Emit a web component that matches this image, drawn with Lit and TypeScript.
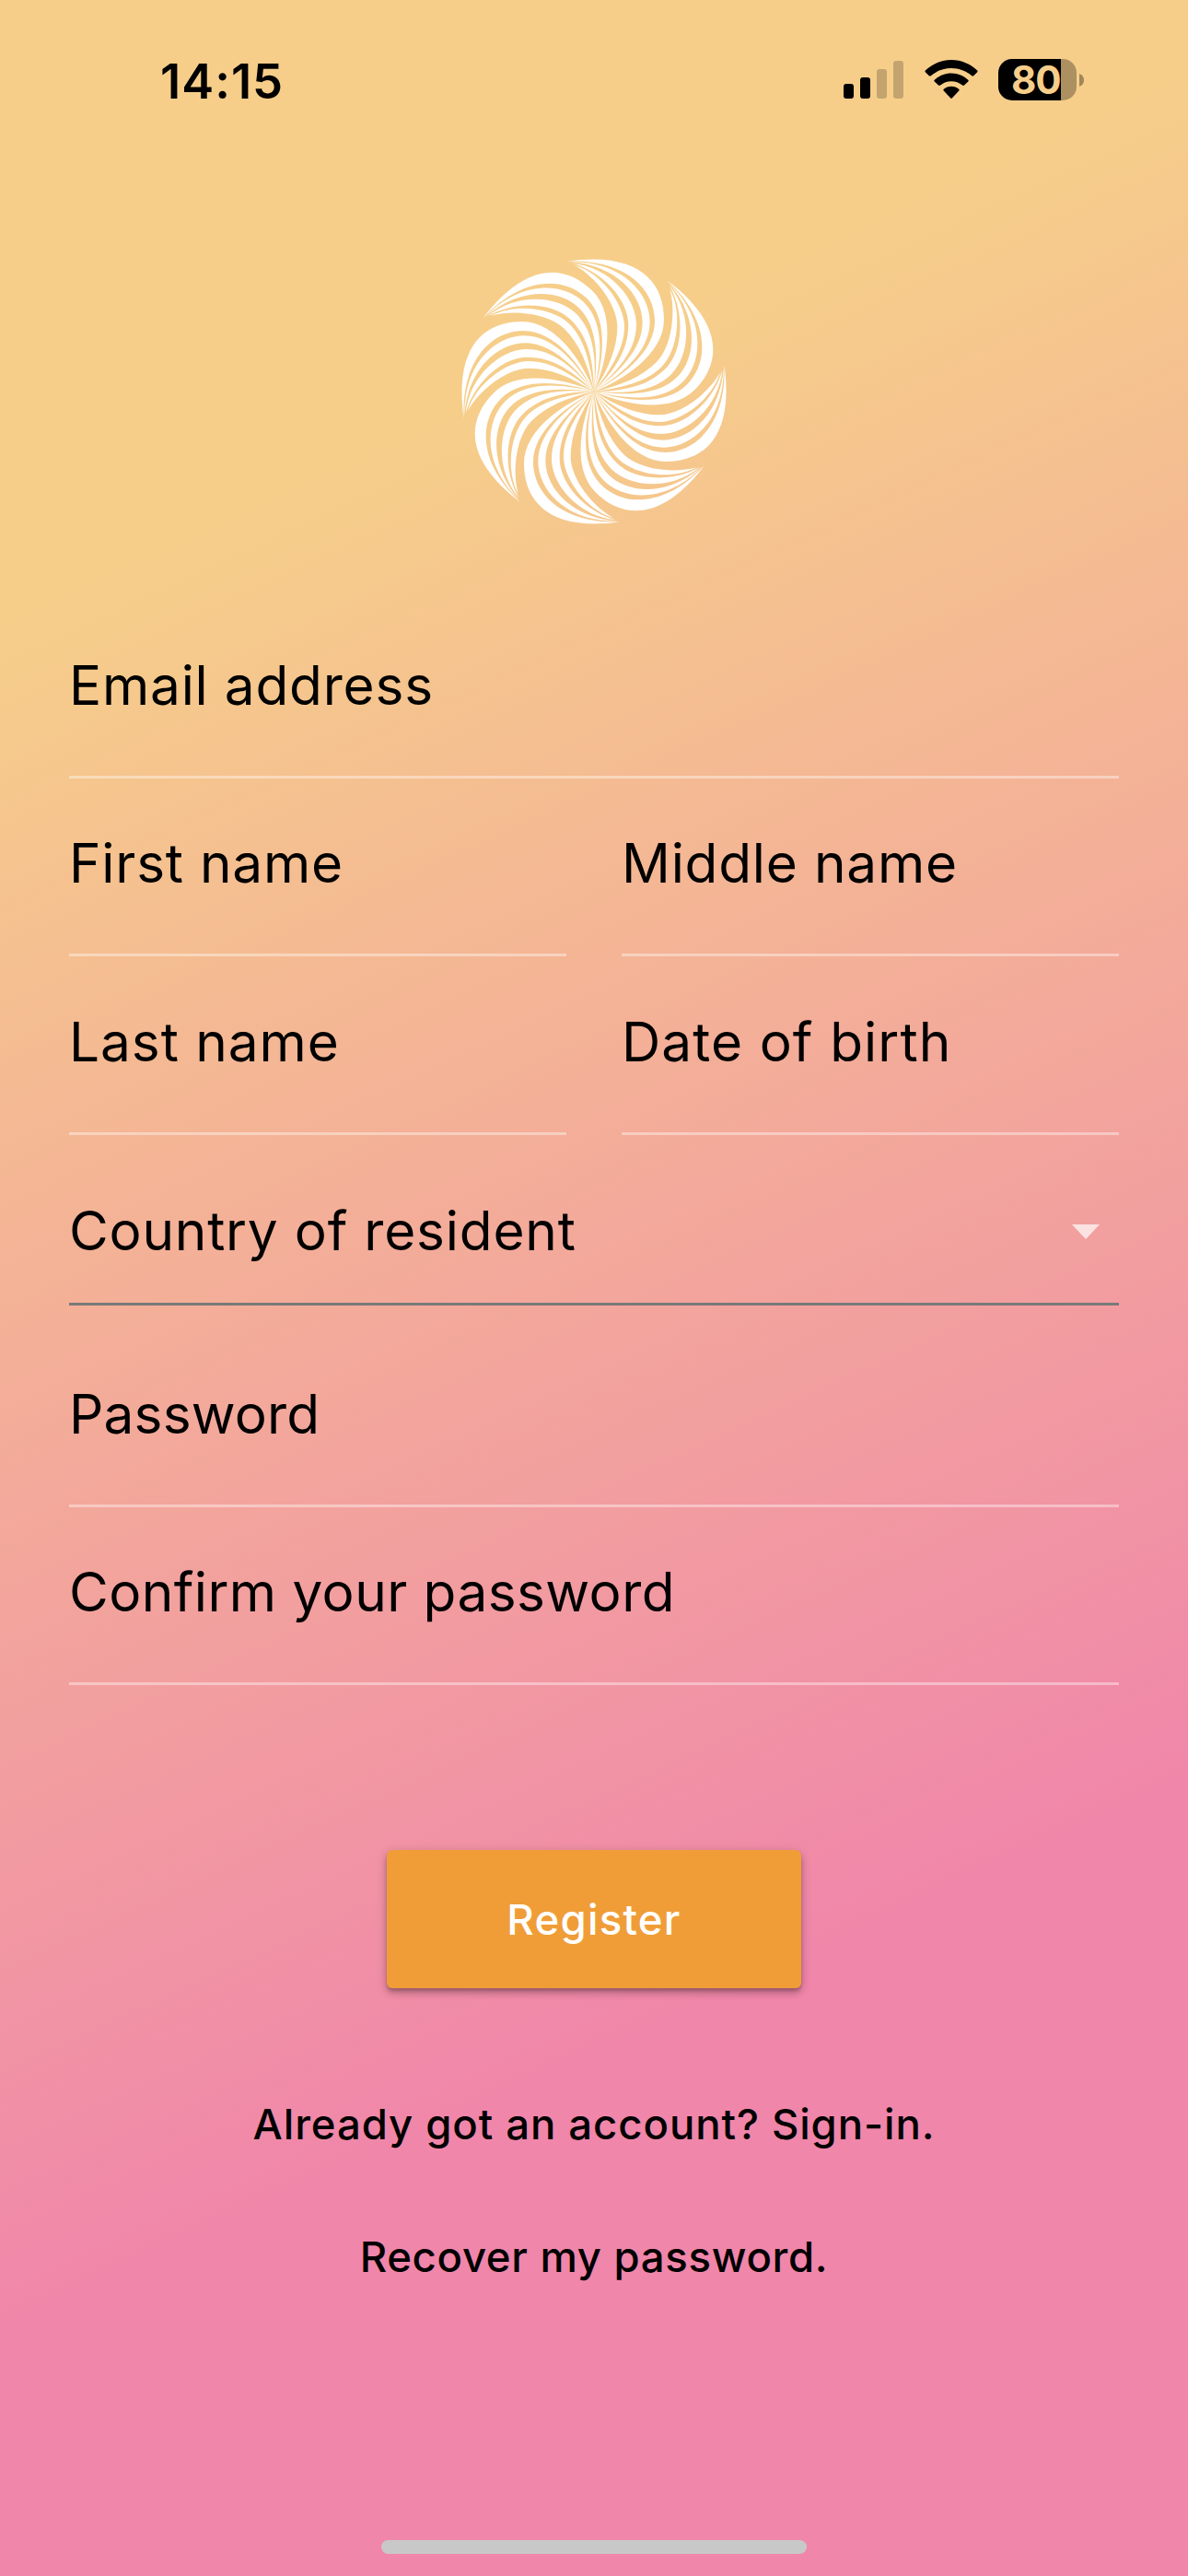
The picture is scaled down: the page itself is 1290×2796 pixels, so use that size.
import { css, html, LitElement, svg } from "lit";
import { customElement, property } from "lit/decorators.js";
import { styleMap } from "lit/directives/style-map.js";

// One arm of the pinwheel: four crescents running from the centre to a shared tip.
const CRESCENTS = [
  "M0 0C90-35 228-120 228-235C228-362 140-457-89-424C95-434 198-338 198-230C198-125 84-45 0 0Z",
  "M0 0C80-50 182-125 182-228C182-320 90-425-76-422C70-412 158-315 158-225C158-135 75-59 0 0Z",
  "M0 0C71-62 138-130 138-220C138-300 55-405-70-418C35-388 112-295 112-218C112-132 65-68 0 0Z",
  "M0 0C55-72 99-140 99-212C99-285 25-385-62-411C10-370 76-280 76-212C76-142 48-76 0 0Z",
];

const ARMS = [0, 45, 90, 135, 180, 225, 270, 315];

@customElement("pinwheel-logo")
export class PinwheelLogo extends LitElement {
  static styles = css`
    :host {
      display: block;
      width: 290px;
      height: 290px;
    }

    .wheel {
      display: block;
      width: 100%;
      height: 100%;
      fill: #fff;
    }
  `;

  render() {
    return html`
      <svg class="wheel" viewBox="-435 -435 870 870" aria-hidden="true">
        ${ARMS.map(
          (angle) => svg`<g transform="rotate(${angle})">${CRESCENTS.map((d) => svg`<path d=${d} />`)}</g>`
        )}
      </svg>
    `;
  }
}

@customElement("status-bar")
export class StatusBar extends LitElement {
  static styles = css`
    :host {
      display: flex;
      justify-content: space-between;
      align-items: center;
      height: 47px;
      padding: 63px 113px 0 174px;
    }

    .time {
      padding-top: 3px;
      font-size: 52.5px;
      font-weight: 600;
      line-height: 50px;
      letter-spacing: 1px;
    }

    .icons {
      display: flex;
      align-items: center;
    }

    .signal,
    .wifi {
      margin-right: 22px;
    }

    .battery {
      display: flex;
      align-items: center;
      gap: 3px;
    }

    .level {
      box-sizing: border-box;
      width: 85px;
      height: 45px;
      padding-left: 14px;
      border-radius: 15px;
      background: linear-gradient(90deg, #000 68px, rgba(0, 0, 0, 0.3) 68px);
      color: #f6ce8a;
      font-size: 42px;
      font-weight: 700;
      line-height: 46px;
      letter-spacing: -1px;
    }
  `;

  @property() time = "";
  @property({ type: Number }) charge = 0;

  render() {
    return html`
      <div class="time">${this.time}</div>
      <div class="icons">
        <svg class="signal" width="66" height="45" viewBox="0 0 66 45">
          <rect x="0" y="27" width="11" height="16" rx="3" />
          <rect x="18" y="20" width="11" height="23" rx="3" />
          <rect x="36" y="11" width="11" height="32" rx="3" opacity="0.2" />
          <rect x="54" y="2" width="11" height="41" rx="3" opacity="0.2" />
        </svg>
        <svg class="wifi" width="58" height="45" viewBox="0 0 58 45">
          <path d="M29 1C40 1 50 5.500 57.200 12.500Q58 13.500 57 14.500L53.200 18.200Q52.200 19 51.200 18.200C45 13 37.500 10 29 10S13 13 6.800 18.200Q5.800 19 4.800 18.200L1 14.500Q0 13.500 .8 12.500C8 5.500 18 1 29 1Z" />
          <path d="M29 15.500C36.500 15.500 42.500 18.500 47.300 22.700Q48.200 23.600 47.300 24.500L43 28.500Q42 29.400 41 28.500C37.500 25.800 33.500 24.300 29 24.300S20.500 25.800 17 28.500Q16 29.400 15 28.500L10.700 24.500Q9.800 23.600 10.700 22.700C15.500 18.500 21.500 15.500 29 15.500Z" />
          <path d="M29 29.800C32.300 29.800 35 31 37.200 32.700Q38.200 33.600 37.300 34.500L30 42.200Q29 43.200 28 42.200L20.700 34.500Q19.800 33.600 20.800 32.700C23 31 25.700 29.800 29 29.800Z" />
        </svg>
        <div class="battery">
          <div class="level">${this.charge}</div>
          <svg class="nub" width="5" height="14" viewBox="0 0 5 14">
            <path d="M0 0Q5 2 5 7T0 14Z" opacity="0.35" />
          </svg>
        </div>
      </div>
    `;
  }
}

@customElement("text-field")
export class TextField extends LitElement {
  static styles = css`
    :host {
      box-sizing: border-box;
      display: flex;
      flex: 1;
      align-items: flex-end;
      justify-content: space-between;
      height: 193.5px;
      padding-bottom: 63px;
      border-bottom: 3px solid rgba(255, 255, 255, 0.4);
    }

    :host([select]) {
      height: 185px;
      padding-bottom: 43px;
      border-bottom-color: #797979;
    }

    .label {
      font-size: 58.5px;
      line-height: 70px;
      white-space: nowrap;
    }

    .arrow {
      width: 30px;
      height: 16px;
      margin: 0 21px 26px 0;
      fill: rgba(255, 255, 255, 0.7);
    }
  `;

  @property() label = "";
  @property({ type: Number }) tracking = 0.8;
  @property({ type: Boolean, reflect: true }) select = false;

  render() {
    return html`
      <div class="label" style=${styleMap({ letterSpacing: `${this.tracking}px` })}>${this.label}</div>
      ${this.select
        ? html`<svg class="arrow" viewBox="0 0 30 16"><path d="M0 0H30L15 16Z" /></svg>`
        : null}
    `;
  }
}

@customElement("app-root")
export class AppRoot extends LitElement {
  static styles = css`
    :host {
      display: flex;
      flex-direction: column;
      box-sizing: border-box;
      width: 1290px;
      height: 2796px;
      overflow: hidden;
      background: linear-gradient(155.23deg, #f6ce8a 20%, #f086aa 75%);
      color: #000;
      font-family: Inter, "Liberation Sans", sans-serif;
    }

    .logo {
      align-self: center;
      margin-top: 170px;
    }

    .form {
      display: flex;
      flex-direction: column;
      margin-top: 81px;
      padding: 0 75px;
    }

    .row {
      display: flex;
      gap: 60px;
    }

    .after-select {
      margin-top: 25.5px;
    }

    .actions {
      display: flex;
      flex-direction: column;
      align-items: center;
      margin-top: 179px;
    }

    .register {
      width: 450px;
      height: 150px;
      padding: 2px 0 0;
      border: 0;
      border-radius: 6px;
      background: #f09d38;
      box-shadow: 0 3px 3px rgba(0, 0, 0, 0.14), 0 6px 6px rgba(0, 0, 0, 0.12), 0 3px 12px rgba(0, 0, 0, 0.2);
      color: #fff;
      font: 500 45.5px/54px Inter, "Liberation Sans", sans-serif;
      letter-spacing: 1.3px;
    }

    .link {
      color: inherit;
      font-size: 45.5px;
      font-weight: 500;
      line-height: 54px;
      text-decoration: none;
      white-space: nowrap;
    }

    .sign-in {
      margin-top: 121px;
      letter-spacing: 0.93px;
    }

    .recover {
      margin-top: 90px;
      letter-spacing: 0.7px;
    }

    .home {
      width: 462px;
      height: 15px;
      margin: auto auto 24px;
      border-radius: 8px;
      background: #c8c8c8;
    }
  `;

  render() {
    return html`
      <status-bar time="14:15" charge="80"></status-bar>
      <pinwheel-logo class="logo"></pinwheel-logo>
      <div class="form">
        <div class="row"><text-field label="Email address"></text-field></div>
        <div class="row">
          <text-field label="First name"></text-field>
          <text-field label="Middle name"></text-field>
        </div>
        <div class="row">
          <text-field label="Last name" tracking="0.95"></text-field>
          <text-field label="Date of birth" tracking="1.1"></text-field>
        </div>
        <div class="row"><text-field label="Country of resident" select></text-field></div>
        <div class="row after-select"><text-field label="Password" tracking="0.2"></text-field></div>
        <div class="row"><text-field label="Confirm your password" tracking="0.45"></text-field></div>
      </div>
      <div class="actions">
        <button class="register">Register</button>
        <a class="link sign-in">Already got an account? Sign-in.</a>
        <a class="link recover">Recover my password.</a>
      </div>
      <div class="home"></div>
    `;
  }
}
